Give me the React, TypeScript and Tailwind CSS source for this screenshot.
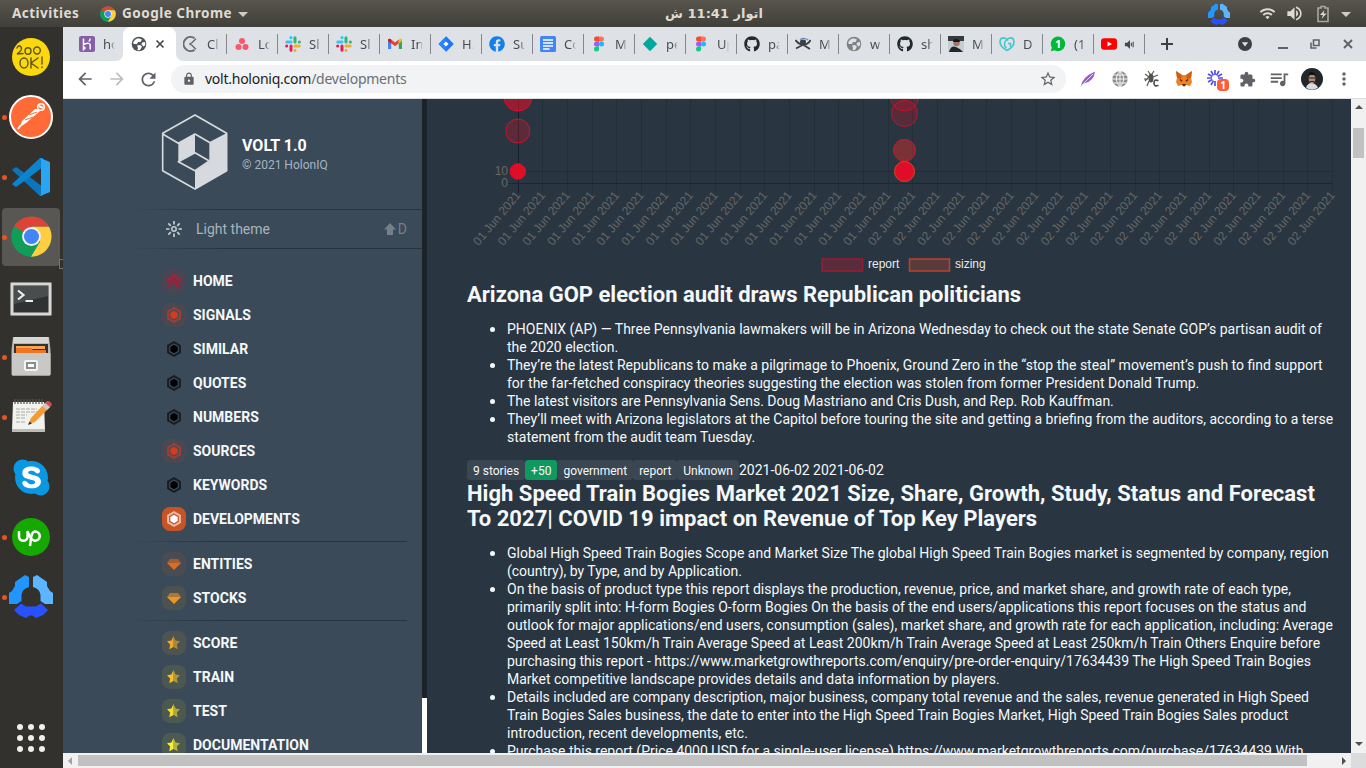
import React from "react";
import { FaGithub, FaSkype, FaFacebook } from "react-icons/fa";
import { MdStarBorder, MdLock, MdExtension, MdQueueMusic, MdRefresh, MdArrowBack, MdArrowForward, MdVolumeUp, MdMoreVert, MdWifi } from "react-icons/md";

type SvgProps = { size?: number; children?: React.ReactNode; box?: string; className?: string };
const Svg = ({ size = 16, box = "0 0 16 16", children, className = "" }: SvgProps) => (
  <svg width={size} height={size} viewBox={box} className={`shrink-0 ${className}`} fill="none">{children}</svg>
);

const ChromeLogo = ({ size }: { size: number }) => (
  <Svg size={size} box="0 0 48 48">
    <circle cx="24" cy="24" r="23.5" fill="#0f9d58" />
    <path d="M24 24 3.6 12.3A23.6 23.6 0 0 1 44.4 12.5H24Z" fill="#db4437" />
    <path d="M3.6 12.3A23.6 23.6 0 0 0 23.5 47.6L34 29.8 24 24 14 30Z" fill="#0f9d58" />
    <path d="M44.4 12.5A23.6 23.6 0 0 1 23.5 47.6L34.3 29.5 24 12.5Z" fill="#ffcd40" />
    <circle cx="24" cy="24" r="11" fill="#f1f1f1" />
    <circle cx="24" cy="24" r="8.8" fill="#4285f4" />
  </Svg>
);

const Hubstaff = ({ size }: { size: number }) => (
  <Svg size={size} box="0 0 44 44">
    <path d="M16 1 20 3 20 13Q13 15 12.500 21V27L8 30H0V19L3 17 6 12V8Z" fill="#2196ff" />
    <path d="M28 1 24 3 24 13Q31 15 31.500 21V27L36 30H44V19L41 17 38 12V8Z" fill="#5bb5ff" />
    <path d="M5 36 12 29.500 17 32.500H27L32 29.500 39 36 34 41 27 44 23.500 41.500H20.500L17 44 10 41Z" fill="#2952ff" />
  </Svg>
);

const GlobeSolid = ({ c, bg }: { c: string; bg: string }) => (
  <Svg>
    <circle cx="8" cy="8" r="7.300" fill={c} />
    <path d="M7.500 2.200 11 3.500 9.500 6H7L6 8H3L2 6.800Q3.500 3 7.500 2.200ZM6 9.500 9 9 11 10.500 9 14Q7.500 14.500 6.500 14L7 12Z" fill={bg} />
    <path d="M11 6.500 14 6 14.300 9 12.500 10.500 10.500 8.500Z" fill={bg} />
  </Svg>
);
const GlobeGrid = () => (
  <Svg size={18} box="0 0 18 18" className="ml-[14px]">
    <circle cx="9" cy="9" r="7.700" fill="#8b8d8f" />
    <path d="M9 1V17M1 9H17M2.500 5H15.500M2.500 13H15.500M9 1Q1.500 9 9 17M9 1Q16.500 9 9 17" stroke="#fff" strokeWidth=".9" />
  </Svg>
);

const Heroku = () => (
  <Svg>
    <rect width="16" height="16" rx="2" fill="#8560a8" />
    <path d="M4.500 2.500V8.500Q11.200 6 11.200 9V13.500M11.200 2.500Q11 4.500 9.800 5.500M4.500 10.500V13.500L6 12Z" stroke="#fff" strokeWidth="1.500" />
  </Svg>
);
const Clockify = () => (
  <Svg>
    <path d="M11.500 2.200A7 7 0 1 0 11.500 13.800" stroke="#6a6d71" strokeWidth="2" />
    <path d="M8.500 7 13 2.800M8.500 9 13 13.200" stroke="#6a6d71" strokeWidth="1.500" /><circle cx="7.500" cy="8" r="1.300" fill="#6a6d71" />
  </Svg>
);
const Asana = () => (
  <Svg><g fill="#f9576b"><circle cx="8" cy="5" r="3" /><circle cx="4.500" cy="11" r="3" /><circle cx="11.500" cy="11" r="3" /></g></Svg>
);
const Slack = () => (
  <Svg>
    <g strokeWidth="3" strokeLinecap="round">
      <path d="M6 1.600V1.700M1.800 6H6" stroke="#36c5f0" />
      <path d="M10 1.800V6M14.300 6H14.400" stroke="#2eb67d" />
      <path d="M10 10H14.200M10 14.300V14.400" stroke="#ecb22e" />
      <path d="M6 10V14.200M1.600 10H1.700" stroke="#e01e5a" />
    </g>
  </Svg>
);
const Gmail = () => (
  <Svg>
    <path d="M1 4V13H4.200V6.500Z" fill="#4285f4" /><path d="M15 4V13H11.800V6.500Z" fill="#34a853" />
    <path d="M1 3.500Q2 1.800 4.200 3.500L8 6.500 11.800 3.500V7.300L8 10.200 4.200 7.300Z" fill="#ea4335" />
    <path d="M11.800 3.500Q14 1.800 15 3.500V5L11.800 7.500Z" fill="#fbbc04" /><path d="M1 3.500V5L4.200 7.500V3.500Q2 1.800 1 3.500Z" fill="#c5221f" />
  </Svg>
);
const Jira = () => (
  <Svg><path d="M8 0.300 15.700 8 8 15.700 0.300 8Z" fill="#2684ff" /><path d="M8 0.300 15.700 8 8 15.700Z" fill="#1868ea" opacity=".5" /><path d="M8 5.400 10.600 8 8 10.600 5.400 8Z" fill="#fff" /></Svg>
);
const Docs = () => (
  <Svg><rect width="16" height="16" rx="1.500" fill="#4285f4" /><path d="M3 4H13M3 7H13M3 10H13M3 13H9.500" stroke="#fff" strokeWidth="1.400" /></Svg>
);
const Figma = () => (
  <Svg>
    <path d="M8 .5H5.500A2.500 2.500 0 0 0 5.500 5.500H8Z" fill="#f24e1e" /><path d="M8 .5H10.500A2.500 2.500 0 0 1 10.500 5.500H8Z" fill="#ff7262" />
    <path d="M8 5.500H5.500A2.500 2.500 0 0 0 5.500 10.500H8Z" fill="#a259ff" /><circle cx="10.500" cy="8" r="2.500" fill="#1abcfe" />
    <path d="M8 10.500H5.500A2.500 2.500 0 1 0 8 13Z" fill="#0acf83" />
  </Svg>
);
const Teal = () => <Svg><path d="M8 .8 15.200 8 8 15.200 .8 8Z" fill="#00a99d" /></Svg>;
const Ninja = () => (
  <Svg>
    <path d="M.5 4Q3 8 8 8.500T15.500 4M7.500 9 1 12.500M8.500 9 15 13" stroke="#3c3f43" strokeWidth="1.800" />
    <ellipse cx="8" cy="6" rx="3" ry="2.400" fill="#3c3f43" /><path d="M5 3.500Q9 1 13 4" stroke="#5a91cf" strokeWidth="1.300" />
  </Svg>
);
const Photo = () => (
  <Svg><rect width="16" height="16" fill="#c8cdd0" /><rect width="16" height="5" fill="#343a3e" /><path d="M1 16Q3 9 8 11T15 16Z" fill="#22272b" /><circle cx="8.500" cy="7" r="3.200" fill="#a47764" /><path d="M5 6Q6 2 9 3T12 6Z" fill="#15191b" /></Svg>
);
const Godaddy = () => (
  <Svg>
    <path d="M8 14.500C3 12 .5 8 1.200 4.500 2 1 6 1 9 4.500M8 14.500C13 12 15.500 8 14.800 4.500 14 1 10 1 7 4.500 4.500 7 5.500 11 7.500 12" stroke="#45c5cc" strokeWidth="1.600" />
    <path d="M9 7.500H11.500V11" stroke="#45c5cc" strokeWidth="1.500" />
  </Svg>
);
const Whatsapp = () => (
  <Svg><path d="M8.200 .5A7.300 7.300 0 1 1 4.600 14.300L.8 15.300 1.900 11.600A7.300 7.300 0 0 1 8.200 .5Z" fill="#00b93b" /><text x="8.200" y="12" textAnchor="middle" fontSize="11" fontWeight="700" fill="#fff" fontFamily="Noto Sans">1</text></Svg>
);
const Youtube = () => <Svg><rect y="2.300" width="16" height="11.400" rx="3" fill="#f00" /><path d="M6.500 5.500 11 8 6.500 10.500Z" fill="#fff" /></Svg>;

const tabs: [React.ReactNode, string][] = [
  [<Clockify />, "Cl"], [<Asana />, "Lo"], [<Slack />, "Sl"], [<Slack />, "Sl"], [<Gmail />, "In"], [<Jira />, "H."],
  [<FaFacebook size={16} color="#1080ee" />, "Su"], [<Docs />, "Co"], [<Figma />, "M"], [<Teal />, "pe"], [<Figma />, "Up"],
  [<FaGithub size={16} color="#24292e" />, "pa"], [<Ninja />, "M"], [<GlobeSolid c="#7f8284" bg="#dee1e6" />, "w"],
  [<FaGithub size={16} color="#24292e" />, "sh"], [<Photo />, "M"], [<Godaddy />, "D"], [<Whatsapp />, "(1"],
];

const TabText = ({ t }: { t: string }) => (
  <span className="ml-2 w-3 overflow-hidden whitespace-nowrap text-[13px] leading-5 text-[#4a4d51] [mask-image:linear-gradient(90deg,#000_60%,transparent)]">{t}</span>
);

const TopBar = () => (
  <div className="grid h-[27px] shrink-0 grid-cols-3 items-center bg-linear-to-b from-[#58554d] to-[#403f3a] font-['Noto_Sans',sans-serif] text-[13.5px] font-bold text-[#dedbd3]">
    <div className="flex items-center pl-3">
      <span className="w-[88px] tracking-[0.45px]">Activities</span>
      <ChromeLogo size={16} />
      <span className="whitespace-nowrap pl-1.5 tracking-[0.5px]">Google Chrome</span>
      <Svg size={10} className="ml-1.5" box="0 0 10 10"><path d="M0 3H10L5 8Z" fill="#cfccc4" /></Svg>
    </div>
    <div dir="rtl" className="text-center font-['DejaVu_Sans',sans-serif] text-[13px]"><span className="relative left-[31px]">اتوار 11:41 ش</span></div>
    <div className="flex items-center justify-end pr-[15px]">
      <Hubstaff size={22} />
      <MdWifi size={17} className="ml-[29px]" />
      <MdVolumeUp size={19} className="ml-[9px]" />
      <Svg size={18} className="ml-[10px]" box="0 0 18 18"><path d="M4 3H7V1.500H11V3H14V16.500H4Z" stroke="#a9a69f" strokeWidth="1.600" /><path d="M10.500 5 6 10H9L7.500 14 12.500 8.500H9.500Z" fill="#dedbd3" /></Svg>
      <Svg size={10} className="ml-[9px]" box="0 0 10 10"><path d="M0 3H10L5 8Z" fill="#cfccc4" /></Svg>
    </div>
  </div>
);

const Postman = () => (
  <Svg size={44} box="0 0 44 44">
    <circle cx="22" cy="22" r="21" fill="#ff6a36" stroke="#fff" strokeWidth="2" />
    <path d="M11 32 13 26 26 14Q29 13 31 16L17 28Z" fill="#fff" /><path d="M20 20 28 17M16 25 24 22" stroke="#ff6a36" />
    <circle cx="32" cy="12" r="3.300" stroke="#fff" strokeWidth="1.400" /><path d="M30 11 34 13" stroke="#fff" strokeWidth="2" /><path d="M12 30 9 34" stroke="#fff" strokeWidth="2" />
  </Svg>
);
const Vscode = () => (
  <Svg size={40} box="0 0 40 40">
    <path d="M1 13 4 10.500Q5 10 6 10.500L32 30V38.500L29 39Z" fill="#0b75bd" />
    <path d="M1 27 4 29.500Q5 30 6 29.500L32 10V1L29 1Z" fill="#0a84cf" />
    <path d="M29 1 38 4.500Q39 5 39 6V34Q39 35 38 35.500L29 39Q30 38 30 36V4Q30 2 29 1Z" fill="#2aa5f2" />
  </Svg>
);
const Terminal = () => (
  <Svg size={42} box="0 0 42 42">
    <rect x=".5" y="4.500" width="41" height="33" rx="1" fill="#d6d7d5" stroke="#8c8d8b" /><rect x="3.500" y="7.500" width="35" height="27" fill="#2e3233" /><path d="M4 8H38V18L4 26Z" fill="#4a4d4d" />
    <path d="M8 12.500 13.500 17 8 21.500" stroke="#eee" strokeWidth="2.200" /><path d="M15.500 23H23" stroke="#eee" strokeWidth="2" />
  </Svg>
);
const Files = () => (
  <Svg size={40} box="0 0 40 40">
    <path d="M2 1H38L39.500 14V38Q39.500 39.500 38 39.500H2Q.5 39.500 .5 38V14Z" fill="#b8b8b6" /><path d="M3 1H37L38 7H2Z" fill="#d7d7d5" />
    <rect x="3" y="8" width="34" height="10" fill="#34322e" /><path d="M5 10H34V13H5Z" fill="#f7a64c" /><path d="M5 12H20L22 14H35V18H5Z" fill="#ed7625" />
    <path d="M1 17H39.500V38Q39.500 39.500 38 39.500H2Q1 39.500 1 38Z" fill="#c8c8c6" /><rect x="14" y="25" width="12" height="9" rx="1" stroke="#f4f4f4" strokeWidth="2" fill="#8d8d8b" /><rect x="17" y="28" width="6" height="3" fill="#fff" />
  </Svg>
);
const Notes = () => (
  <Svg size={44} box="0 0 44 44">
    <path d="M4 7H35L36 36H3Z" fill="#f2f2ee" /><path d="M3 34H36V37H3Z" fill="#bdbdb8" />
    <path d="M6 4V9M9 4V9M12 4V9M15 4V9M18 4V9M21 4V9M24 4V9M27 4V9M30 4V9M33 4V9" stroke="#55544f" strokeWidth="1.200" />
    <path d="M7 14H28M7 17H29M7 20H18M7 23H17M7 27H16" stroke="#aaa" strokeDasharray="4 1" />
    <path d="M19.500 29 22 23 36 8 41 12 26 27Z" fill="#f49b36" /><path d="M35 9 38 6Q42 6 43 10L40 13Z" fill="#d84c50" /><path d="M33 11 36 8 41 12 38 15Z" fill="#c9c9c9" /><path d="M19 30 20.500 26.500 23 28.500Z" fill="#333" />
  </Svg>
);
const OkBadge = () => (
  <Svg size={40} box="0 0 40 40">
    <circle cx="20" cy="20" r="19" fill="#fbd80c" />
    <g stroke="#5c5422" strokeWidth="1.400" strokeLinecap="round"><path d="M6 11Q8 7 10 10T6 17L12 16.500" /><ellipse cx="17" cy="14" rx="3" ry="3.300" /><ellipse cx="26" cy="13.500" rx="3.300" ry="3.500" /><ellipse cx="13" cy="26" rx="4" ry="5" /><path d="M20 21V31M27 21 20 26 27 31M31 20V27M31 30V30.500" /></g>
  </Svg>
);
const Upwork = () => (
  <Svg size={38} box="0 0 38 38">
    <circle cx="19" cy="19" r="19" fill="#15a800" />
    <path d="M7 13V18.500A4.300 4.300 0 0 0 15.600 18.500V13Q18 21 22 22.500A4.600 4.600 0 1 0 22.500 13.500Q19.800 14.500 19 20L18 28" stroke="#fff" strokeWidth="2.500" />
  </Svg>
);

const dock: [React.ReactNode, boolean, string?][] = [
  [<OkBadge />, false], [<Postman />, true], [<Vscode />, true], [<ChromeLogo size={41} />, true, "relative -top-px"], [<Terminal />, false, "relative top-0.5"], [<Files />, true, "relative -top-px"], [<Notes />, true],
  [<span className="relative flex size-10 items-center justify-center"><span className="absolute size-7 rounded-full bg-white" /><FaSkype size={41} color="#0b98e2" className="relative shrink-0" /></span>, false],
  [<Upwork />, true],
  [<Hubstaff size={44} />, true, "relative -top-px"],
];

const Dock = () => (
  <div className="flex w-[63px] shrink-0 flex-col bg-[#33312d]">
    {dock.map(([icon, on, place = "relative"], i) => (
      <div key={i} className="relative flex h-[60px] items-center justify-center pr-px">
        {i === 3 && <div className="absolute inset-x-0.5 inset-y-px mr-px rounded bg-[#595753]" />}
        {i === 3 && <div className="absolute -bottom-[2px] right-0 h-[10px] w-1 border border-r-0 border-[#77756f]" />}
        {on && <div className="absolute left-[2px] size-[5px] rounded-full bg-[#e95420]" />}
        <div className={place}>{icon}</div>
      </div>
    ))}
    <div className="mt-auto mb-4 grid grid-cols-3 gap-[5px] self-center pr-px">
      {Array.from({ length: 9 }, (_, i) => <div key={i} className="size-1.5 rounded-full bg-[#f0efed]" />)}
    </div>
  </div>
);

const TabStrip = () => (
  <div className="flex h-[34px] shrink-0 bg-[#dee1e6]">
    <div className="flex w-[60px] items-center pl-4"><Heroku /><TabText t="ho" /></div>
    <div className="relative flex w-[53px] items-center rounded-t-lg bg-white pl-2">
      <svg className="absolute -left-2 bottom-0" width="8" height="8"><path d="M8 0V8H0Q8 8 8 0Z" fill="#fff" /></svg>
      <svg className="absolute -right-2 bottom-0" width="8" height="8"><path d="M0 0V8H8Q0 8 0 0Z" fill="#fff" /></svg>
      <GlobeSolid c="#505357" bg="#fff" />
      <Svg size={10} className="ml-2" box="0 0 10 10"><path d="M1.500 1.500 8.500 8.500M8.500 1.500 1.500 8.500" stroke="#45484c" strokeWidth="1.700" /></Svg>
    </div>
    {tabs.map(([icon, t], i) => (
      <div key={i} className="flex w-[51px] items-center">
        <div className="flex h-5 w-full items-center border-r border-[#85888d] pl-[7px]">{icon}<TabText t={t} /></div>
      </div>
    ))}
    <div className="flex w-[51px] items-center">
      <div className="flex h-5 w-full items-center border-r border-[#85888d] pl-[7px]"><Youtube />
        <Svg size={11} className="ml-[7px]" box="0 0 12 12"><path d="M1 4H3.500L6.500 1V11L3.500 8H1Z" fill="#45484c" /><path d="M8 4V8M10 3V9" stroke="#45484c" strokeWidth="1.200" /></Svg>
      </div>
    </div>
    <div className="flex flex-1 items-center pl-4">
      <Svg size={12} box="0 0 12 12"><path d="M6 0V12M0 6H12" stroke="#3c4043" strokeWidth="2" /></Svg>
      <div className="ml-auto flex items-center pr-[13px]">
        <Svg size={14} box="0 0 14 14"><circle cx="7" cy="7" r="7" fill="#3c4043" /><path d="M3.800 5.200H10.200L7 9.500Z" fill="#dee1e6" /></Svg>
        <Svg size={10} className="ml-[26px]" box="0 0 10 10"><path d="M0 9H10" stroke="#5f6368" strokeWidth="2" /></Svg>
        <Svg size={10} className="ml-[22px]" box="0 0 10 10"><path d="M3.500 1H9V6.500H3.500ZM1 3.500V9H6.500" stroke="#5f6368" strokeWidth="1.600" /></Svg>
        <Svg size={10} className="ml-[23px]" box="0 0 10 10"><path d="M1 1 9 9M9 1 1 9" stroke="#5f6368" strokeWidth="1.900" /></Svg>
      </div>
    </div>
  </div>
);

const Toolbar = () => (
  <div className="flex h-[38px] shrink-0 items-center border-b border-[#dcdfe1] bg-white px-3 pb-px text-[#5f6368]">
    <MdArrowBack size={20} /><MdArrowForward size={20} className="ml-3 text-[#bcbec0]" /><MdRefresh size={21} className="ml-[11px]" />
    <div className="ml-3 flex h-7 w-[895px] items-center rounded-full bg-[#f1f3f4] pl-[11px] pr-2.5">
      <MdLock size={14} /><span className="ml-[9px] whitespace-nowrap text-[14px] leading-6 tracking-[-0.25px] text-[#202124]">volt.holoniq.com<span className="text-[#6b6f74]">/developments</span></span>
      <MdStarBorder size={18} className="ml-auto -mr-px" />
    </div>
    <div className="ml-[13px] flex items-center">
      <Svg size={18} box="0 0 18 18"><path d="M1.500 17Q3 7 16 1.500 15 11 6 13 4 14 1.500 17Z" fill="#9b5cd0" /><path d="M2 16 14 4" stroke="#e6d2f5" /></Svg>
      <GlobeGrid />
      <Svg size={18} className="ml-[14px]" box="0 0 18 18"><ellipse cx="8" cy="8" rx="2.500" ry="4.500" fill="#57514c" /><path d="M5 1 7 4M11 1 9 4M2 4 6 7 2 11M15 5 10 7M4 16 6 11M5 9H1" stroke="#57514c" strokeWidth="1.100" /><path d="M15.500 10.800Q11 8.800 11 13T15.500 15.300" stroke="#57514c" strokeWidth="1.700" /></Svg>
      <Svg size={18} className="ml-[14px]" box="0 0 18 18"><path d="M1 1 7 5H11L17 1 16 8 17 12 15 16 11 15 9 17 7 15 3 16 1 12 2 8Z" fill="#ed8123" /><path d="M1 1 7 5 6 9 2 8ZM17 1 11 5 12 9 16 8Z" fill="#cf5d13" /><path d="M5 9.500 7 11M13 9.500 11 11" stroke="#3c2414" strokeWidth="1.400" /><path d="M7 14H11L10 16H8Z" fill="#47342b" /></Svg>
      <div className="relative ml-[14px]">
        <Svg size={18} box="0 0 18 18"><path d="M8 0V5M8 11V16M0 8H5M11 8H16M4 1 6.500 5.400M12 1 9.500 5.400M1 4 5.400 6.500M1 12 5.400 9.500M15 4 10.600 6.500M4 15 6.500 10.600" stroke="#554ff0" strokeWidth="1.700" /></Svg>
        <span className="absolute left-[10px] top-[9px] flex h-3 w-3 items-center justify-center rounded-sm bg-[#ff5c3a] text-[10px] font-bold leading-3 text-white">1</span>
      </div>
      <MdExtension size={17} className="ml-[14px]" />
      <MdQueueMusic size={22} className="ml-3" />
      <Svg size={22} className="ml-[11px]" box="0 0 22 22"><circle cx="11" cy="11" r="11" fill="#20262a" /><path d="M5 19.500Q7 14.500 11 15T17 19.500Q11 24 5 19.500Z" fill="#d8dbe3" /><ellipse cx="11" cy="10.500" rx="3.300" ry="5" fill="#b58a74" /><path d="M7.500 8Q7.500 3.500 11 4T14.500 8L13 7H9Z" fill="#101214" /><path d="M8 10H14M9 13.500H13" stroke="#2b211d" /></Svg>
      <MdMoreVert size={20} className="ml-[11px]" />
    </div>
  </div>
);

const Hex = ({ c }: { c: string }) => (
  <Svg size={16}><path d="M8 1.200 13.900 4.600V11.400L8 14.800 2.100 11.400V4.600Z" stroke={c} strokeOpacity=".6" strokeWidth="2" /><path d="M8 3.800 11.700 5.900V10.100L8 12.200 4.300 10.100V5.900Z" fill={c} /></Svg>
);
const Gem = ({ c }: { c: string }) => (
  <Svg size={16}><path d="M4 3H12L15 7H1Z" fill={c} opacity=".6" /><path d="M1 7H15L8 14Z" fill={c} /></Svg>
);
const Star = ({ c }: { c: string }) => (
  <Svg size={16}><path d="M7.500 1 9.600 5.600 14 6.200 10.900 9.500 11.700 14.200 7.500 12Z" fill={c} opacity=".6" /><path d="M7.500 1 5.400 5.600 1 6.200 4.100 9.500 3.300 14.200 7.500 12Z" fill={c} /></Svg>
);
const House = () => (
  <Svg size={16}><path d="M2.500 9 8 4 13.500 9V15H10V10.500H6V15H2.500Z" fill="#a61c35" opacity=".75" /><path d="M.7 8.500 8 2 15.300 8.500" stroke="#cf1230" strokeWidth="1.600" /></Svg>
);

const NavItem = ({ icon, chip, label }: { icon: React.ReactNode; chip: string; label: string }) => (
  <div className="flex h-[34px] items-center gap-[7px] pl-[99px]">
    <span className={`flex size-6 items-center justify-center rounded-lg ${chip}`}>{icon}</span>
    <span className="text-sm font-bold text-[#f5f8fa]">{label}</span>
  </div>
);
const Rule = ({ full }: { full?: boolean }) => (
  <div className={`ml-[63px] h-px shrink-0 bg-linear-to-r from-transparent via-[#27333e] via-35% to-[#27333e] ${full ? "" : "my-[5px] mr-[15px]"}`} />
);

const Sidebar = () => (
  <div className="flex w-[359px] shrink-0 flex-col overflow-hidden bg-[#3a4a58]">
    <div className="flex h-[110px] shrink-0 items-start pl-[98px] pt-[14px]">
      <svg width="67" height="77" viewBox="93 44 201 231" fill="none">
        <path d="M195 50 290 105V217L195 272 98 217V105Z M98 107 145 135 195 107 240 133 290 107 M195 163 238 188 195 217 145 190Z" stroke="#d6dade" strokeWidth="5" strokeLinejoin="round" />
        <path d="M145 135 195 107V163L145 190ZM238 133 290 107V217L195 272V217L238 190Z" fill="#d6dade" />
      </svg>
      <div className="ml-[14px] mt-[23px]"><div className="text-[16px] font-bold leading-[20px] text-white">VOLT 1.0</div><div className="text-xs leading-[18px] text-[#a7b4bf]">© 2021 HolonIQ</div></div>
    </div>
    <Rule full />
    <div className="flex h-[38px] shrink-0 items-center pl-[103px] pr-[15px] text-sm text-[#a7b4bf]">
      <Svg><circle cx="8" cy="8" r="2.200" stroke="#c4cdd4" strokeWidth="1.500" /><path d="M8 0V3.500M8 12.500V16M0 8H3.500M12.500 8H16M2.300 2.300 4.800 4.800M11.200 11.200 13.700 13.700M13.700 2.300 11.200 4.800M4.800 11.200 2.300 13.700" stroke="#c4cdd4" strokeWidth="1.700" /></Svg>
      <span className="ml-[14px]">Light theme</span>
      <Svg size={12} className="ml-auto" box="0 0 12 12"><path d="M6 0 12 6.500H9V12H3V6.500H0Z" fill="#73808b" /></Svg><span className="ml-0.5 text-[#73808b]">D</span>
    </div>
    <Rule full />
    <div className="flex flex-col pt-[15px]">
      <NavItem label="HOME" chip="bg-[#4a4553]" icon={<House />} />
      <NavItem label="SIGNALS" chip="bg-[#4a4853]" icon={<Hex c="#d53b22" />} />
      <NavItem label="SIMILAR" chip="" icon={<Hex c="#000" />} />
      <NavItem label="QUOTES" chip="" icon={<Hex c="#000" />} />
      <NavItem label="NUMBERS" chip="" icon={<Hex c="#000" />} />
      <NavItem label="SOURCES" chip="bg-[#4a4853]" icon={<Hex c="#d53b22" />} />
      <NavItem label="KEYWORDS" chip="" icon={<Hex c="#000" />} />
      <NavItem label="DEVELOPMENTS" chip="bg-[#c85425]" icon={<Hex c="#fff" />} />
      <Rule />
      <NavItem label="ENTITIES" chip="bg-[#4a4c52]" icon={<Gem c="#dc6d20" />} />
      <NavItem label="STOCKS" chip="bg-[#4c5250]" icon={<Gem c="#ea9622" />} />
      <Rule />
      <NavItem label="SCORE" chip="bg-[#4d5451]" icon={<Star c="#efaa29" />} />
      <NavItem label="TRAIN" chip="bg-[#4d5751]" icon={<Star c="#f3c02a" />} />
      <NavItem label="TEST" chip="bg-[#4c5951]" icon={<Star c="#f7dc2d" />} />
      <NavItem label="DOCUMENTATION" chip="bg-[#4c5b52]" icon={<Star c="#f8ee33" />} />
    </div>
  </div>
);

const xs = Array.from({ length: 34 }, (_, i) => 518 + i * 24.68);
const Chart = () => (
  <svg width="924" height="178" viewBox="427 99 924 178" className="block shrink-0 font-['Liberation_Sans',sans-serif] text-[12px]">
    <g stroke="#212d37">
      {xs.map((x, i) => <line key={i} x1={Math.floor(x) + 0.5} x2={Math.floor(x) + 0.5} y1="99" y2="193" stroke={i ? "#222e38" : "#17202a"} />)}
      <path d="M508 171.500H1332M508 183.500H1332" /><path d="M508 183.500H1332" stroke="#1c2731" />
    </g>
    <g fill="#666">
      <text x="508" y="175" textAnchor="end">10</text><text x="508" y="187" textAnchor="end">0</text>
      {xs.map((x, i) => <text key={i} transform={`translate(${x} 193) rotate(-50)`} textAnchor="end" y="4">{i < 16 ? "01 Jun 2021" : "02 Jun 2021"}</text>)}
    </g>
    <g stroke="#df0d28">
      <circle cx="518" cy="97" r="14" fill="#df0d28" fillOpacity=".6" />
      <circle cx="517.800" cy="131" r="12" fill="#df0d28" fillOpacity=".28" strokeOpacity=".9" />
      <circle cx="517.800" cy="171.500" r="7.800" fill="#df0d28" />
      <g strokeOpacity=".8"><circle cx="904.500" cy="97" r="14" fill="#df0d28" fillOpacity=".25" /><circle cx="904.500" cy="113.500" r="13" fill="#df0d28" fillOpacity=".25" /></g>
      <circle cx="904.500" cy="150.300" r="11" fill="#df2d28" fillOpacity=".45" />
      <circle cx="904.500" cy="171.500" r="10" fill="#df0d28" stroke="#e04225" />
    </g>
    <rect x="822" y="259" width="40.500" height="12" fill="#5a2c3b" stroke="#961c34" strokeWidth="1.500" />
    <rect x="909.500" y="259" width="40" height="12" fill="#593b3c" stroke="#b94330" strokeWidth="1.500" />
    <g fill="#e8ebee"><text x="868" y="268">report</text><text x="955" y="268">sizing</text></g>
  </svg>
);

const stories1 = [
  ["PHOENIX (AP) — Three Pennsylvania lawmakers will be in Arizona Wednesday to check out the state Senate GOP’s partisan audit of", "the 2020 election."],
  ["They’re the latest Republicans to make a pilgrimage to Phoenix, Ground Zero in the “stop the steal” movement’s push to find support", "for the far-fetched conspiracy theories suggesting the election was stolen from former President Donald Trump."],
  ["The latest visitors are Pennsylvania Sens. Doug Mastriano and Cris Dush, and Rep. Rob Kauffman."],
  ["They’ll meet with Arizona legislators at the Capitol before touring the site and getting a briefing from the auditors, according to a terse", "statement from the audit team Tuesday."],
];
const stories2 = [
  ["Global High Speed Train Bogies Scope and Market Size The global High Speed Train Bogies market is segmented by company, region", "(country), by Type, and by Application."],
  ["On the basis of product type this report displays the production, revenue, price, and market share, and growth rate of each type,", "primarily split into: H-form Bogies O-form Bogies On the basis of the end users/applications this report focuses on the status and", "outlook for major applications/end users, consumption (sales), market share, and growth rate for each application, including: Average", "Speed at Least 150km/h Train Average Speed at Least 200km/h Train Average Speed at Least 250km/h Train Others Enquire before", "purchasing this report - https://www.marketgrowthreports.com/enquiry/pre-order-enquiry/17634439 The High Speed Train Bogies", "Market competitive landscape provides details and data information by players."],
  ["Details included are company description, major business, company total revenue and the sales, revenue generated in High Speed", "Train Bogies Sales business, the date to enter into the High Speed Train Bogies Market, High Speed Train Bogies Sales product", "introduction, recent developments, etc."],
  ["Purchase this report (Price 4000 USD for a single-user license) https://www.marketgrowthreports.com/purchase/17634439 With"],
];
const List = ({ data }: { data: string[][] }) => (
  <ul className="pl-[23px] text-sm leading-[18px]">
    {data.map((lines, i) => (
      <li key={i} className="flex whitespace-nowrap">
        <span className="mr-3 mt-[7px] size-[5px] shrink-0 rounded-full bg-[#f5f8fa]" />
        <div>{lines.map((l, j) => <div key={j}>{l}</div>)}</div>
      </li>
    ))}
  </ul>
);
const Tag = ({ c, t }: { c: string; t: string }) => <span className={`flex h-5 items-center justify-center rounded-[3px] px-1.5 pt-0.5 text-xs ${c}`}>{t}</span>;

const Content = () => (
  <div className="flex min-w-0 flex-1 flex-col overflow-hidden bg-[#293641] text-[#f5f8fa]">
    <Chart />
    <div className="whitespace-nowrap pl-10 pt-[5px]">
      <h2 className="text-[22px] font-bold leading-[25px]">Arizona GOP election audit draws Republican politicians</h2>
      <div className="pt-[13px]"><List data={stories1} /></div>
      <div className="flex items-center pt-[14px] text-sm leading-5">
        <Tag c="bg-[#3a4752]" t="9 stories" /><Tag c="bg-[#0f9960]" t="+50" /><Tag c="bg-[#3a4752]" t="government" /><Tag c="bg-[#3a4752]" t="report" /><Tag c="bg-[#3a4752]" t="Unknown" />
        <span>2021-06-02 2021-06-02</span>
      </div>
      <h2 className="pt-px text-[22px] font-bold leading-[25px] tracking-[0.02px]">High Speed Train Bogies Market 2021 Size, Share, Growth, Study, Status and Forecast<br />To 2027| COVID 19 impact on Revenue of Top Key Players</h2>
      <div className="pt-[13px]"><List data={stories2} /></div>
    </div>
  </div>
);

export default function App() {
  return (
    <div className="flex h-[768px] w-[1366px] flex-col overflow-hidden font-['Noto_Sans',sans-serif]">
      <TopBar />
      <div className="flex min-h-0 flex-1">
        <Dock />
        <div className="flex min-w-0 flex-1 flex-col">
          <TabStrip />
          <Toolbar />
          <div className="flex min-h-0 flex-1 font-['Roboto',sans-serif]">
            <Sidebar />
            <div className="flex w-[5px] shrink-0 flex-col bg-[#1b2228]"><div className="mt-auto h-[55px] bg-white" /></div>
            <Content />
            <div className="flex w-[15px] shrink-0 flex-col items-center bg-[#f1f1f1] py-[5px]">
              <Svg size={8} box="0 0 8 8"><path d="M0 5 4 1 8 5Z" fill="#505050" /></Svg>
              <div className="mt-[16px] h-[30px] w-[11px] bg-[#c1c1c1]" />
              <Svg size={8} className="mt-auto" box="0 0 8 8"><path d="M0 2 4 6 8 2Z" fill="#505050" /></Svg>
            </div>
          </div>
          <div className="flex h-[15px] shrink-0 items-center bg-[#f1f1f1]">
            <Svg size={8} className="ml-[4px]" box="0 0 8 8"><path d="M5 0 1 4 5 8Z" fill="#a3a3a3" /></Svg>
            <div className="ml-[3px] h-[11px] w-[1229px] bg-[#c1c1c1]" />
            <Svg size={8} className="ml-auto mr-[3px]" box="0 0 8 8"><path d="M2 0 6 4 2 8Z" fill="#505050" /></Svg>
            <div className="h-full w-[15px] bg-[#dcdcdc]" />
          </div>
        </div>
      </div>
    </div>
  );
}
